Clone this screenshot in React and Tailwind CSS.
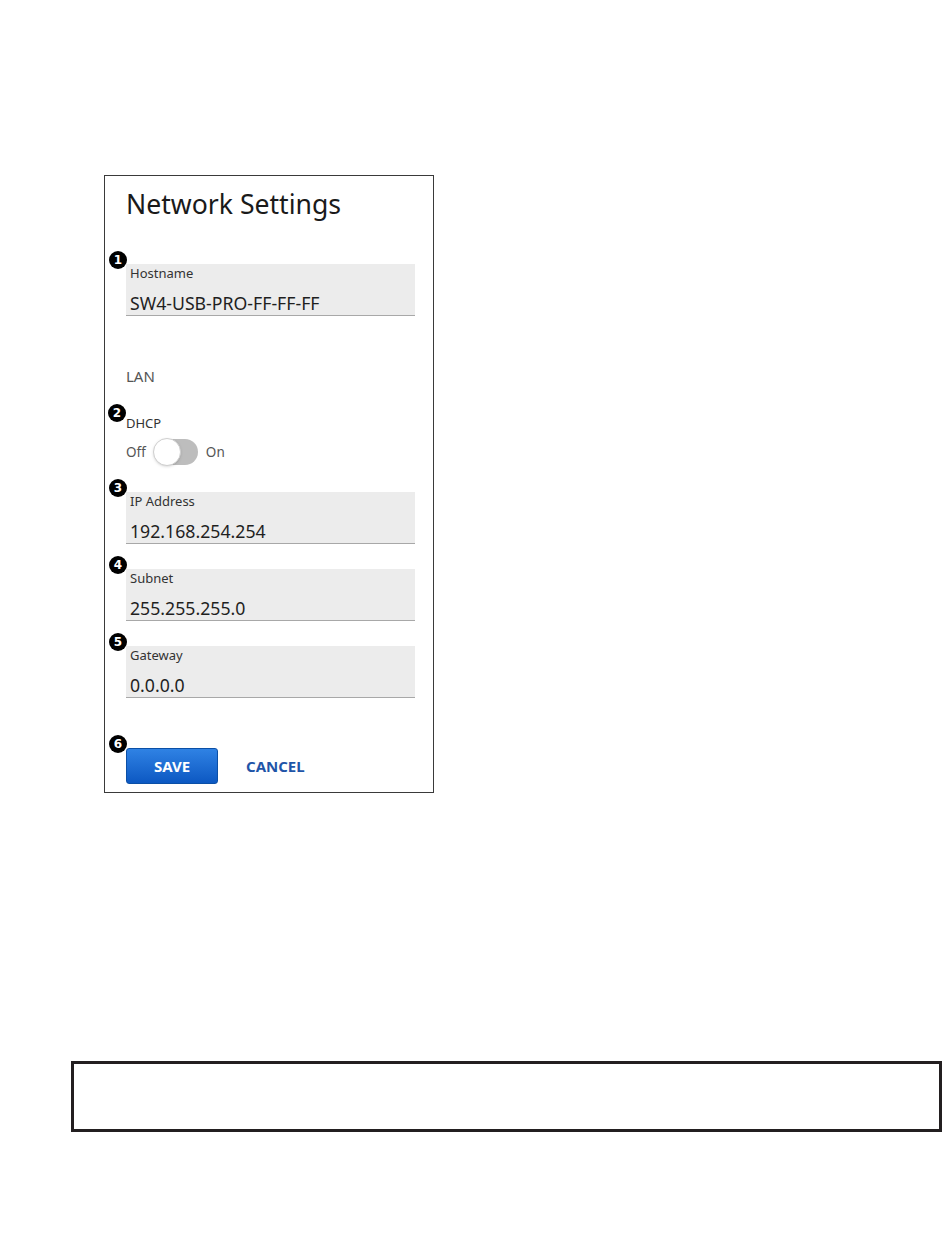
import { useState } from 'react'

function Marker({ n, className = '-left-[17px] -top-[13px]' }) {
  return (
    <span
      className={`absolute ${className} flex h-[18px] w-[18px] items-center justify-center rounded-full bg-black font-['DejaVu_Sans',sans-serif] text-[12px] font-bold leading-none text-white`}
    >
      {n}
    </span>
  )
}

function Field({ n, label, value }) {
  return (
    <div className="relative h-[52px] border-b border-[#a8a8a8] bg-[#ececec] px-[4px] pt-px">
      <Marker n={n} />
      <div className="text-[13px] leading-[16px] text-[#333]">{label}</div>
      <div className="mt-[10px] text-[17.7px] leading-[24px] text-[#1f1f1f]">{value}</div>
    </div>
  )
}

export default function App() {
  const [dhcp, setDhcp] = useState(false)

  return (
    <div className="min-h-[1260px] w-[950px] bg-white pt-[175px] font-['Noto_Sans',sans-serif]">
      <div className="ml-[104px] flex h-[618px] w-[330px] flex-col border border-[#3a3a3a] pl-[21px] pr-[18px] pt-[11px]">
        <h1 className="text-[26.6px] leading-[34px] font-normal text-[#1a1a1a]">Network Settings</h1>

        <div className="mt-[43px]">
          <Field n="1" label="Hostname" value="SW4-USB-PRO-FF-FF-FF" />
        </div>

        <div className="mt-[50px] text-[15px] leading-[20px] text-[#555]">LAN</div>

        {/* DHCP toggle */}
        <div className="relative mt-[29px]">
          <Marker n="2" className="-left-[18px] -top-[11px]" />
          <div className="text-[13px] leading-[16px] text-[#333]">DHCP</div>
          <div className="mt-[7px] flex h-[28px] items-center gap-[8px] text-[13.5px] text-[#555]">
            <span>Off</span>
            <button
              type="button"
              onClick={() => setDhcp(!dhcp)}
              className={`relative h-[26px] w-[44px] rounded-full ${dhcp ? 'bg-[#4a90e2]' : 'bg-[#bdbdbd]'}`}
            >
              <span
                className={`absolute top-[-1px] h-[28px] w-[28px] rounded-full border border-[#cfcfcf] bg-white shadow-sm ${dhcp ? 'left-[16px]' : 'left-[-1px]'}`}
              />
            </button>
            <span>On</span>
          </div>
        </div>

        <div className="mt-[26px]">
          <Field n="3" label="IP Address" value="192.168.254.254" />
        </div>
        <div className="mt-[25px]">
          <Field n="4" label="Subnet" value="255.255.255.0" />
        </div>
        <div className="mt-[25px]">
          <Field n="5" label="Gateway" value="0.0.0.0" />
        </div>

        <div className="relative mt-[50px] flex items-center gap-[28px]">
          <Marker n="6" />
          <button
            type="button"
            className="h-[36px] w-[92px] rounded-[3px] border border-[#0b4fa6] bg-gradient-to-b from-[#2f82e4] to-[#0c58c2] text-[15px] font-bold text-white"
          >
            SAVE
          </button>
          <button type="button" className="text-[15px] font-bold text-[#1f55a8]">
            CANCEL
          </button>
        </div>
      </div>

      <div className="ml-[71px] mt-[268px] h-[71px] w-[871px] border-[3px] border-[#231f20]" />
    </div>
  )
}
